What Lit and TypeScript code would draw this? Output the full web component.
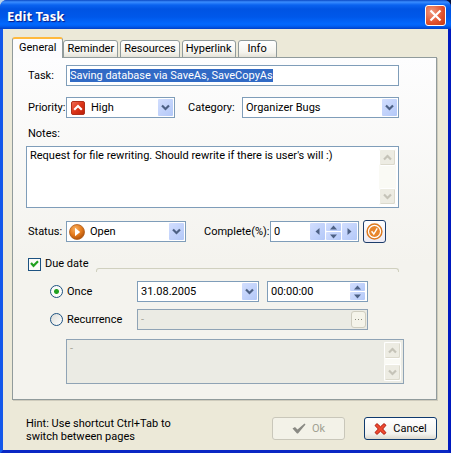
import { LitElement, html, css, svg } from "lit";
import { customElement } from "lit/decorators.js";

const chevron = (up: boolean) => html`<svg width="9" height="7" viewBox="0 0 9 7" aria-hidden="true">
  ${up
    ? svg`<path d="M1 5.5L4.5 2L8 5.5" fill="none" stroke="currentColor" stroke-width="2.2"/>`
    : svg`<path d="M1 1.5L4.5 5L8 1.5" fill="none" stroke="currentColor" stroke-width="2.2"/>`}
</svg>`;

const triangle = (d: string) => html`<svg width="7" height="7" viewBox="0 0 7 7" aria-hidden="true">
  <path d=${d} fill="currentColor"/>
</svg>`;

const UP = "M0 5.5L3.5 1.5L7 5.5Z";
const DOWN = "M0 1.5L3.5 5.5L7 1.5Z";
const LEFT = "M5.5 0L1.5 3.5L5.5 7Z";
const RIGHT = "M1.5 0L5.5 3.5L1.5 7Z";

@customElement("app-root")
export class AppRoot extends LitElement {
  static styles = css`
    :host {
      display: block;
      background: linear-gradient(90deg, #b9d3ea 0 50%, #06123c 50% 100%);
      font: 11px/14px Roboto, "Liberation Sans", Arial, sans-serif;
      color: #000;
    }
    * { box-sizing: border-box; }
    button, input, select, textarea {
      font: inherit;
      color: inherit;
      margin: 0;
      padding: 0;
      border: 0;
      background: none;
      outline: none;
      border-radius: 0;
    }
    svg { display: block; flex: none; }
    .window {
      display: flex;
      flex-direction: column;
      min-height: 100vh;
      border-radius: 7px 7px 0 0;
      overflow: hidden;
      background: #0a3fd8;
    }
    .title {
      display: flex;
      align-items: center;
      justify-content: space-between;
      height: 29px;
      padding: 2px 5px 0 7px;
      background: linear-gradient(#0a48c4 0, #3a8dff 2px, #0a63f0 5px, #0054e3 9px, #0058ea 17px, #0268fe 24px, #0160f4 26px, #0040c8 29px);
    }
    .title h1 {
      margin: 0;
      font: bold 13px/18px "Noto Sans", "Open Sans", sans-serif;
      color: #fff;
      text-shadow: 1px 1px 1px #0a1883;
    }
    .close {
      width: 21px;
      height: 21px;
      display: grid;
      place-items: center;
      border: 1px solid #fff;
      border-radius: 3px;
      background: radial-gradient(circle at 30% 30%, #f09a80, #e0502c 60%, #c43a14);
    }
    .client {
      flex: 1;
      display: flex;
      flex-direction: column;
      padding: 8px 11px 7px 9px;
      background: #ece9d8;
      border: solid;
      border-width: 0 3px 4px 3px;
      border-color: #0831d9 #0019bf #0a28c4 #1458ea;
    }
    .tabs {
      display: flex;
      align-items: flex-end;
      gap: 2px;
      position: relative;
      margin-bottom: -1px;
    }
    .tab {
      height: 18px;
      padding: 0 3px;
      border: 1px solid #919b9c;
      border-radius: 3px 3px 0 0;
      background: linear-gradient(#fff, #f5f4ee 70%, #e4e2d8);
      white-space: nowrap;
    }
    .tab.wide { padding: 0 9px; }
    .tab.active {
      height: 21px;
      padding: 0 6px 2px;
      margin-right: -2px;
      border-top: 2px solid #ffb93c;
      border-bottom: 0;
      background: #fcfcfe;
    }
    .panel {
      display: flex;
      flex-direction: column;
      padding: 7px 37px 15px 13px;
      border: 1px solid #919b9c;
      box-shadow: 1px 1px 0 #cfccbd;
      background: linear-gradient(#fdfdfe, #f4f3ee 60%);
    }
    .row { display: flex; align-items: center; }
    .label { width: 40px; padding-left: 2px; flex: none; white-space: nowrap; }
    .gap { margin-top: 11px; }
    .field {
      display: flex;
      align-items: center;
      height: 21px;
      min-width: 0;
      padding: 1px;
      border: 1px solid #7f9db9;
      background: #fff;
      position: relative;
    }
    .field input { flex: 1; min-width: 0; width: 0; height: 15px; padding-left: 2px; }
    .field input::selection { background: #316ac5; color: #fff; }
    .field select {
      flex: 1;
      min-width: 0;
      height: 17px;
      appearance: none;
      padding-left: 2px;
    }
    .field .icon { margin: 0 4px 0 3px; }
    .status .icon { margin: 0 3px 0 1px; }
    .grow { flex: 1; }
    .drop, .spin {
      display: grid;
      place-items: center;
      width: 15px;
      height: 17px;
      flex: none;
      border-radius: 1px;
      background: linear-gradient(135deg, #d2defe, #b3c8f8);
      color: #4d6185;
    }
    .drop { pointer-events: none; }
    .half { height: 8px; }
    .stack { display: grid; gap: 1px; margin: 0 1px; }
    .w-priority { width: 109px; }
    .w-status { width: 120px; }
    .w-date { width: 122px; }
    .w-time { width: 101px; }
    .w-complete { width: 89px; }
    .category { margin: 0 8px 0 13px; width: 46px; white-space: nowrap; }
    .complete { margin: 0 5px 0 18px; width: 61px; white-space: nowrap; }
    .notes { padding-left: 2px; margin: 9px 0 5px; }
    .memo {
      display: flex;
      height: 62px;
      padding: 2px;
      border: 1px solid #7f9db9;
      background: #fff;
    }
    .memo textarea {
      flex: 1;
      min-width: 0;
      resize: none;
      overflow: hidden;
      padding: 0 1px;
      display: block;
    }
    .scroll {
      display: flex;
      flex-direction: column;
      justify-content: space-between;
      width: 17px;
      background: #fafaf5;
      flex: none;
    }
    .scroll button {
      display: grid;
      place-items: center;
      height: 17px;
      border: 1px solid #fff;
      border-radius: 2px;
      background: #edece3;
      color: #c5c3b8;
      box-shadow: inset -1px -1px 0 #dcdacd;
    }
    .mark {
      display: grid;
      place-items: center;
      width: 23px;
      height: 23px;
      margin-left: 4px;
      border: 1px solid #1d3d6b;
      border-radius: 3px;
      background: linear-gradient(#fff, #eceaf4);
    }
    .status { margin-top: 12px; }
    .due { margin-top: 13px; padding-left: 2px; }
    .due hr {
      flex: 1;
      height: 4px;
      margin: 12px 0 0 8px;
      border: 1px solid #d0d0bf;
      border-bottom: 0;
      border-radius: 3px 3px 0 0;
    }
    .box {
      appearance: none;
      width: 13px;
      height: 13px;
      margin-right: 4px;
      border: 1px solid #1d5281;
      background: #fbfbf9;
    }
    .tick { position: relative; display: flex; align-items: center; }
    .tick svg { position: absolute; left: 2px; top: 3px; pointer-events: none; }
    .box:not(:checked) + svg { display: none; }
    .option { display: flex; align-items: center; width: 111px; padding-left: 24px; flex: none; white-space: nowrap; }
    .radio {
      appearance: none;
      width: 13px;
      height: 13px;
      margin-right: 4px;
      border: 1px solid #1d5281;
      border-radius: 50%;
      background: linear-gradient(135deg, #dcdcd7, #fff);
    }
    .radio:checked {
      background: radial-gradient(circle, #21a121 0 2px, #fbfbf9 3px);
    }
    .once { margin-top: 9px; gap: 8px; }
    .once .option { margin-right: -8px; }
    .recur { margin-top: 7px; padding-right: 31px; }
    .off { background: #ebebe4; border-color: #8fa3b5; color: #a9a899; }
    .dots {
      width: 15px;
      height: 17px;
      display: grid;
      place-items: center;
      border: 1px solid #cfcdbf;
      border-radius: 3px;
      background: #f5f4ea;
      color: #8d8c80;
    }
    .pattern { height: 45px; margin: 9px -5px 0 40px; }
    .footer { display: flex; align-items: flex-start; gap: 19px; padding: 17px 0 0 14px; }
    .hint { flex: 1; margin: 0; max-width: 150px; line-height: 13px; }
    .actions { display: flex; gap: 19px; margin-left: auto; }
    .action {
      display: flex;
      align-items: center;
      justify-content: center;
      gap: 6px;
      width: 73px;
      height: 23px;
      border: 1px solid #0f3a6e;
      border-radius: 3px;
      background: linear-gradient(#fff, #f3f2ee 75%, #dcd8ce);
    }
    .action:disabled { border-color: #c9c7ba; background: #f3f2e8; color: #a1a192; }
  `;

  firstUpdated() {
    const task = this.renderRoot.querySelector<HTMLInputElement>("#task")!;
    task.focus();
    task.select();
  }

  private scroller() {
    return html`<div class="scroll">
      <button aria-label="Scroll up">${chevron(true)}</button>
      <button aria-label="Scroll down">${chevron(false)}</button>
    </div>`;
  }

  private spinner() {
    return html`<div class="stack">
      <button class="spin half" aria-label="Increase">${triangle(UP)}</button>
      <button class="spin half" aria-label="Decrease">${triangle(DOWN)}</button>
    </div>`;
  }

  render() {
    return html`
      <div class="window">
        <header class="title">
          <h1>Edit Task</h1>
          <button class="close" aria-label="Close">
            <svg width="13" height="13" viewBox="0 0 13 13"><path d="M1.5 1.5L11.5 11.5M11.5 1.5L1.5 11.5" stroke="#fff" stroke-width="2.2"/></svg>
          </button>
        </header>
        <main class="client">
          <div class="tabs" role="tablist">
            <button class="tab active" role="tab" aria-selected="true">General</button>
            <button class="tab" role="tab">Reminder</button>
            <button class="tab" role="tab">Resources</button>
            <button class="tab" role="tab">Hyperlink</button>
            <button class="tab wide" role="tab">Info</button>
          </div>
          <section class="panel">
            <div class="row">
              <label class="label" for="task">Task:</label>
              <div class="field grow"><input id="task" type="text" value="Saving database via SaveAs, SaveCopyAs" /></div>
            </div>
            <div class="row gap">
              <label class="label" for="priority">Priority:</label>
              <div class="field w-priority">
                <svg class="icon" width="14" height="14" viewBox="0 0 14 14">
                  <defs><linearGradient id="red" x1="0" y1="0" x2="1" y2="1"><stop offset="0" stop-color="#f0705a"/><stop offset=".5" stop-color="#dc3418"/><stop offset="1" stop-color="#b81c08"/></linearGradient></defs>
                  <rect x=".5" y=".5" width="13" height="13" rx="1.5" fill="url(#red)" stroke="#b0301c"/>
                  <path d="M3.2 8.8L7 5L10.8 8.8" fill="none" stroke="#fff" stroke-width="2.2"/>
                </svg>
                <select id="priority"><option>High</option></select>
                <span class="drop">${chevron(false)}</span>
              </div>
              <label class="category" for="category">Category:</label>
              <div class="field grow">
                <select id="category"><option>Organizer Bugs</option></select>
                <span class="drop">${chevron(false)}</span>
              </div>
            </div>
            <label class="notes" for="notes">Notes:</label>
            <div class="memo">
              <textarea id="notes" .value=${"Request for file rewriting. Should rewrite if there is user's will :)"}></textarea>
              ${this.scroller()}
            </div>
            <div class="row status">
              <label class="label" for="status">Status:</label>
              <div class="field w-status">
                <svg class="icon" width="16" height="16" viewBox="0 0 16 16">
                  <defs><radialGradient id="amber" cx=".4" cy=".3" r=".75"><stop offset="0" stop-color="#f8b060"/><stop offset=".55" stop-color="#e47a1c"/><stop offset="1" stop-color="#a84c08"/></radialGradient></defs>
                  <circle cx="8" cy="8" r="7.5" fill="url(#amber)" stroke="#b06020" stroke-width=".8"/>
                  <path d="M6 3.8L11.2 8L6 12.2Z" fill="#fff"/>
                </svg>
                <select id="status"><option>Open</option></select>
                <span class="drop">${chevron(false)}</span>
              </div>
              <label class="complete" for="complete">Complete(%):</label>
              <div class="field w-complete">
                <input id="complete" type="text" value="0" />
                <button class="spin" aria-label="Previous">${triangle(LEFT)}</button>
                ${this.spinner()}
                <button class="spin" aria-label="Next">${triangle(RIGHT)}</button>
              </div>
              <button class="mark" aria-label="Mark complete">
                <svg width="17" height="17" viewBox="0 0 17 17">
                  <circle cx="8.5" cy="8.5" r="7.4" fill="#fff" stroke="#dd7a20" stroke-width="1.5"/>
                  <circle cx="8.5" cy="8.5" r="5.4" fill="#e8862c"/>
                  <path d="M5.6 8.2L7.8 11L11.2 5.4" fill="none" stroke="#fff" stroke-width="1.4"/>
                </svg>
              </button>
            </div>
            <div class="row due">
              <label class="tick">
                <input class="box" type="checkbox" checked />
                <svg width="9" height="8" viewBox="0 0 9 8"><path d="M1 3L3.5 5.8L8 1.2" fill="none" stroke="#21a121" stroke-width="2.2"/></svg>
                Due date
              </label>
              <hr />
            </div>
            <div class="row once">
              <label class="option"><input class="radio" type="radio" name="when" checked />Once</label>
              <div class="field w-date">
                <input type="text" aria-label="Date" value="31.08.2005" />
                <span class="drop">${chevron(false)}</span>
              </div>
              <div class="field w-time">
                <input type="text" aria-label="Time" value="00:00:00" />
                ${this.spinner()}
              </div>
            </div>
            <div class="row recur">
              <label class="option"><input class="radio" type="radio" name="when" />Recurrence</label>
              <div class="field grow off">
                <input type="text" aria-label="Recurrence rule" value="-" disabled />
                <button class="dots" disabled aria-label="Edit recurrence">
                  <svg width="7" height="1" viewBox="0 0 7 1"><path d="M0 0h1v1H0zM3 0h1v1H3zM6 0h1v1H6z" fill="currentColor"/></svg>
                </button>
              </div>
            </div>
            <div class="memo pattern off">
              <textarea aria-label="Recurrence pattern" disabled .value=${"-"}></textarea>
              ${this.scroller()}
            </div>
          </section>
          <footer class="footer">
            <p class="hint">Hint: Use shortcut Ctrl+Tab to switch between pages</p>
            <div class="actions">
              <button class="action" disabled>
                <svg width="14" height="11" viewBox="0 0 14 11"><path d="M0.5 5.5L3 4L5.5 6.5L12.5 0.5L13.5 1.5L6 10.5H5Z" fill="#8a8a84"/></svg>
                Ok
              </button>
              <button class="action">
                <svg width="13" height="12" viewBox="0 0 13 12"><path d="M1 2.5L3 .6L6.5 3.8L10 .6L12 2.3L8.7 6L12 9.7L10 11.4L6.5 8.2L3 11.4L1 9.5L4.3 6Z" fill="#ee4a30" stroke="#b01c10"/></svg>
                Cancel
              </button>
            </div>
          </footer>
        </main>
      </div>
    `;
  }
}
